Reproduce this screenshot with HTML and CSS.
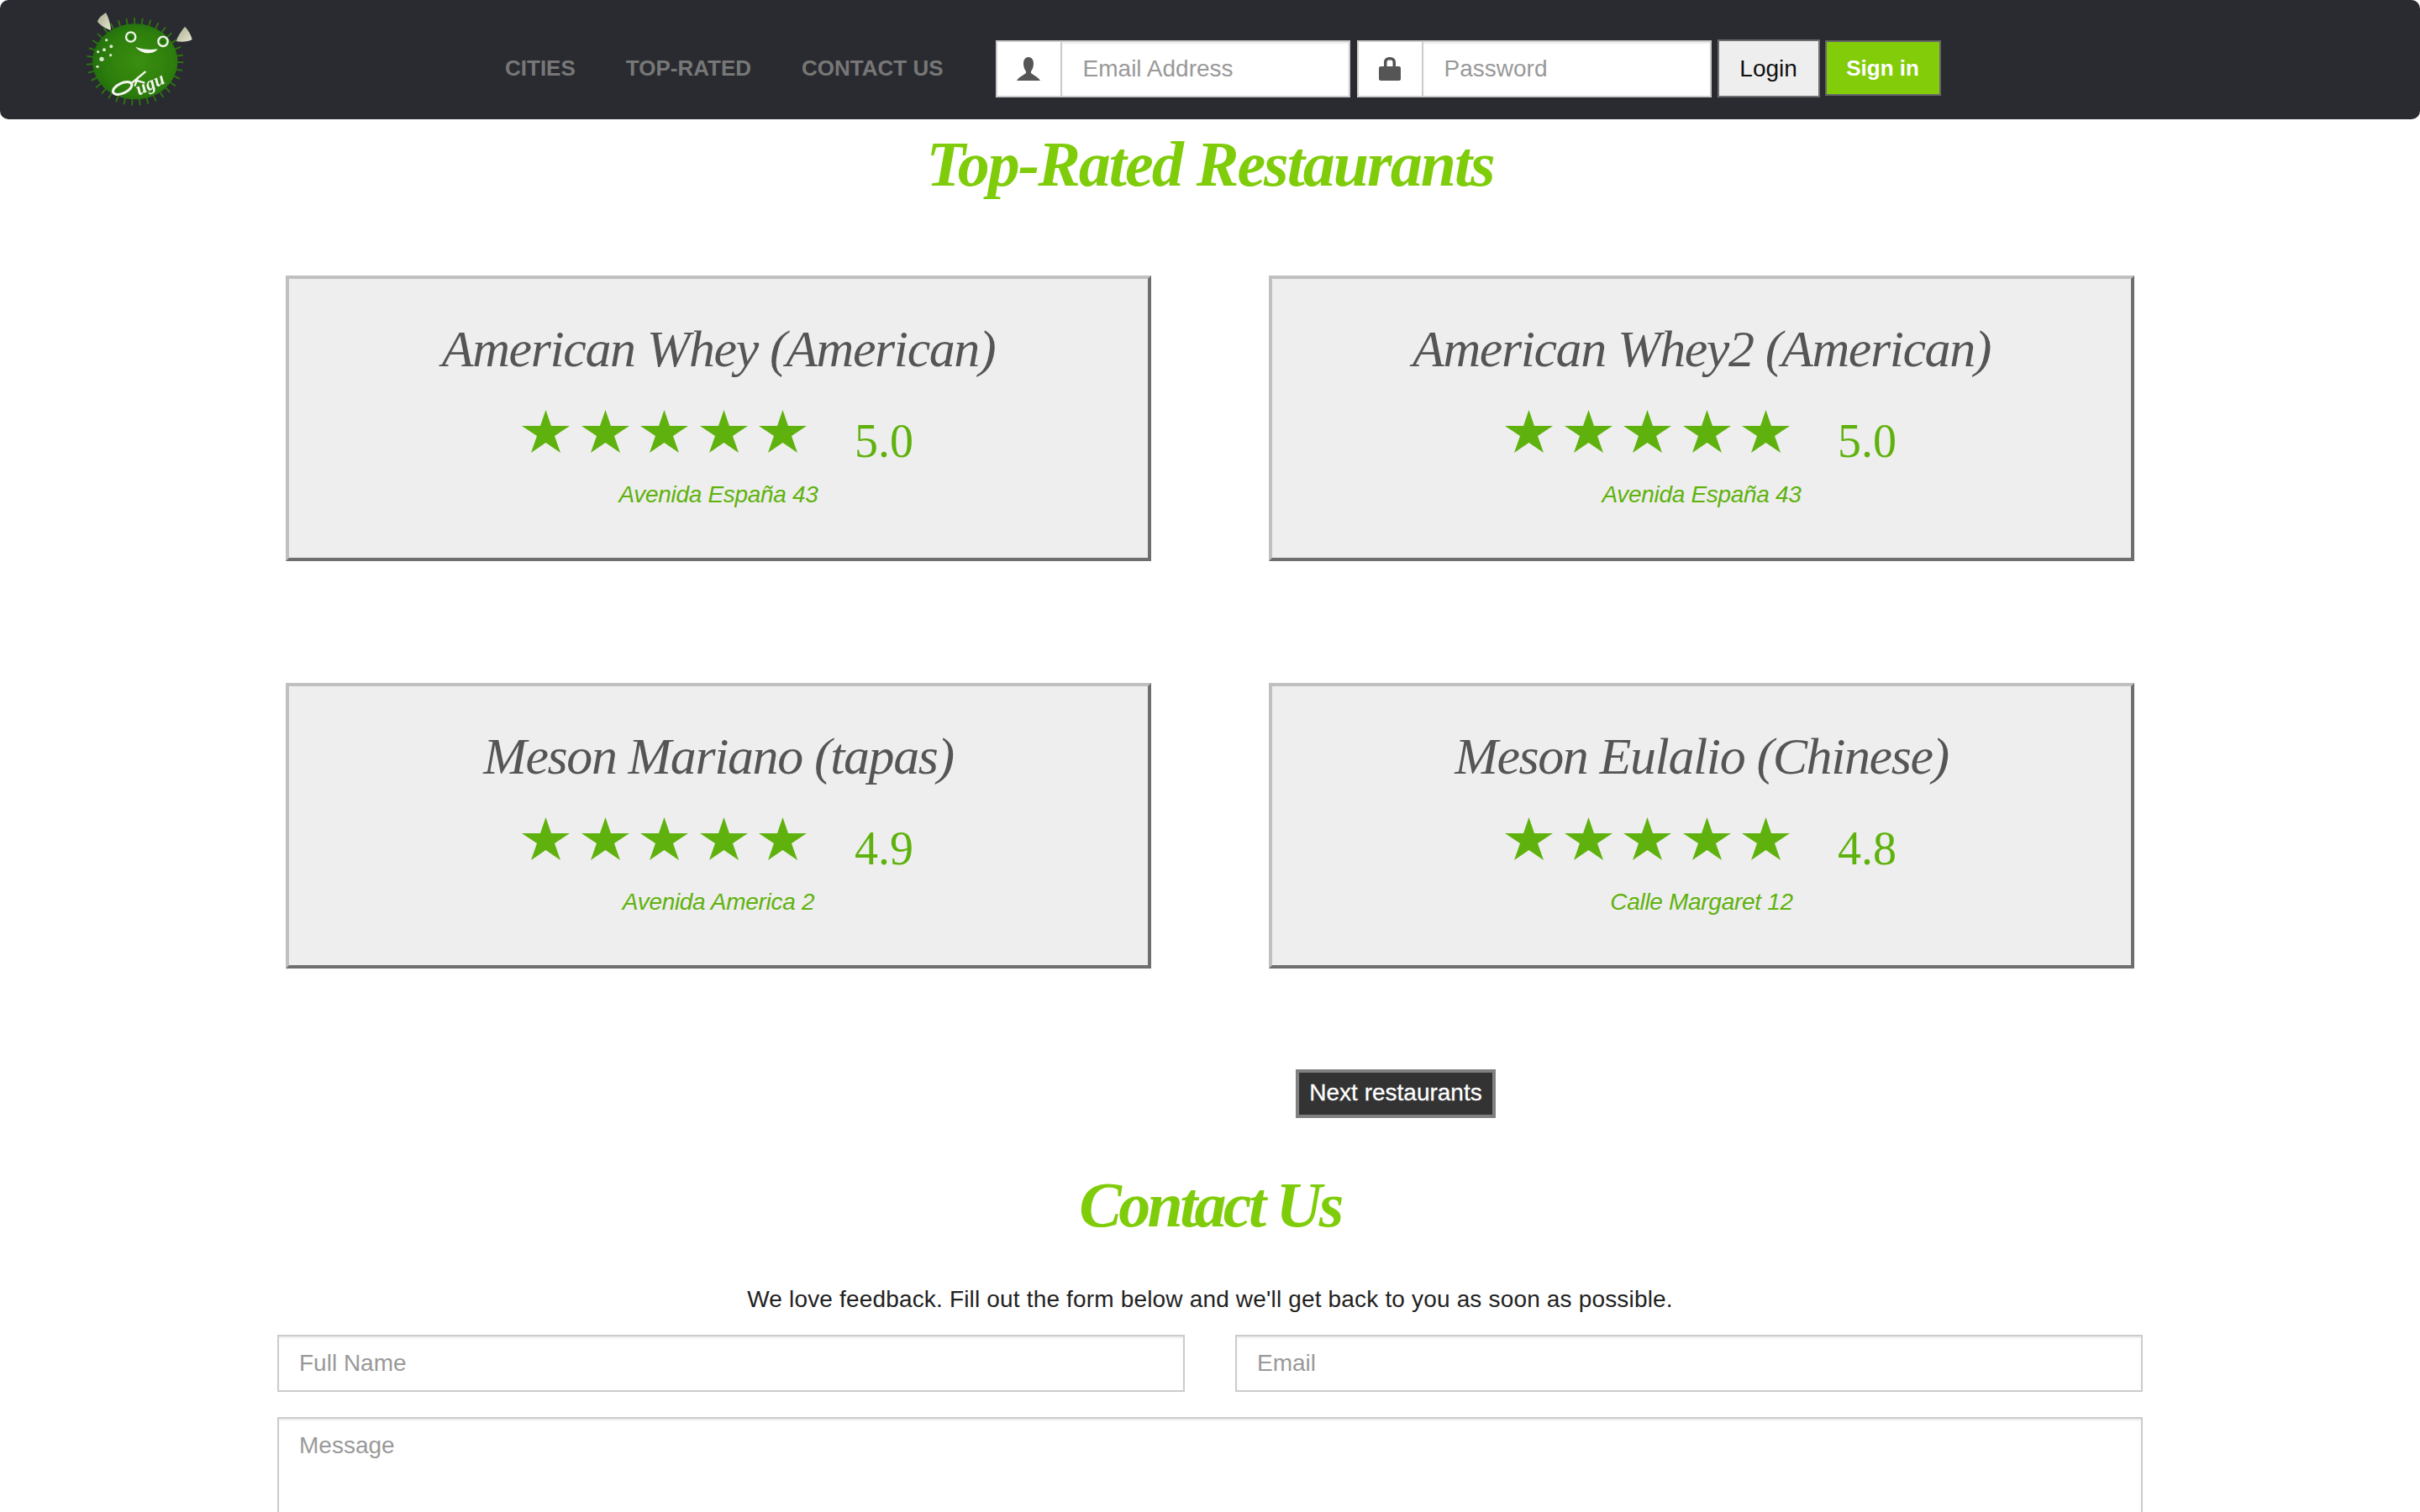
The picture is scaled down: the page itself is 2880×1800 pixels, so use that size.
FILE: index.html
```html
<!DOCTYPE html>
<html lang="en">
<head>
<meta charset="utf-8">
<title>Fugu - Top-Rated Restaurants</title>
<link rel="stylesheet" href="styles.css">
</head>
<body>
<header class="navbar">
  <svg class="logo" viewBox="0 0 450 390" aria-label="Fugu logo">
    <defs>
      <radialGradient id="bodyGrad" cx="55%" cy="50%" r="60%">
        <stop offset="0" stop-color="#3a8f12"/>
        <stop offset="0.7" stop-color="#2c7d0e"/>
        <stop offset="1" stop-color="#1f6a0b"/>
      </radialGradient>
      <linearGradient id="hornGrad" x1="0" y1="0" x2="1" y2="1">
        <stop offset="0" stop-color="#a8ad8a"/>
        <stop offset="1" stop-color="#e6e6d4"/>
      </linearGradient>
      <filter id="soft"><feGaussianBlur stdDeviation="1.6"/></filter>
    </defs>
    <g filter="url(#soft)">
      <path d="M108 30 C90 42 80 52 78 62 C88 76 108 88 126 92 C124 70 118 48 108 30Z" fill="url(#hornGrad)"/>
      <path d="M390 80 C378 94 366 112 358 132 C378 136 402 134 416 126 C412 108 402 92 390 80Z" fill="url(#hornGrad)"/>
      <ellipse cx="212" cy="205" rx="158" ry="142" fill="none" stroke="#2a7a0e" stroke-width="30" stroke-dasharray="5 22"/>
      <ellipse cx="212" cy="205" rx="152" ry="135" fill="url(#bodyGrad)"/>
      <circle cx="197" cy="117" r="17" fill="none" stroke="#f2f5ee" stroke-width="7"/>
      <circle cx="197" cy="119" r="6" fill="#1f6a0b"/>
      <circle cx="312" cy="133" r="17" fill="none" stroke="#f2f5ee" stroke-width="7"/>
      <circle cx="312" cy="135" r="6" fill="#1f6a0b"/>
      <path d="M214 152 C238 162 268 164 293 160 C284 178 238 184 214 152Z" fill="#f4f6ef"/>
      <g fill="#d8e6c8">
        <circle cx="110" cy="128" r="5"/>
        <circle cx="127" cy="151" r="6"/>
        <circle cx="102" cy="163" r="6"/>
        <circle cx="80" cy="170" r="5"/>
        <circle cx="125" cy="182" r="5"/>
        <circle cx="93" cy="196" r="8"/>
        <circle cx="78" cy="223" r="5"/>
      </g>
      <ellipse cx="167" cy="300" rx="36" ry="18" transform="rotate(-25 167 300)" fill="none" stroke="#f4f6ef" stroke-width="9"/>
      <path d="M200 282 L248 242 M222 262 L212 290 M214 272 L244 280" fill="none" stroke="#f4f6ef" stroke-width="7" stroke-linecap="round"/>
      <text class="logo-text" x="226" y="326" transform="rotate(-25 226 326)">ugu</text>
    </g>
  </svg>
  <nav class="nav-links">
    <a class="nav-link" href="#">CITIES</a>
    <a class="nav-link" href="#">TOP-RATED</a>
    <a class="nav-link" href="#">CONTACT US</a>
  </nav>
  <form class="login-form">
    <div class="input-group">
      <span class="addon">
        <svg class="addon-icon" viewBox="0 0 28 28"><path d="M14 0 C9.5 0 8 4 8 8 C8 12 9.5 15 11 17 L11 19 C9 21 3 23 0 28 L28 28 C25 23 19 21 17 19 L17 17 C18.500 15 20 12 20 8 C20 4 18.500 0 14 0Z" fill="#555"/></svg>
      </span>
      <input class="field" type="text" placeholder="Email Address">
    </div>
    <div class="input-group">
      <span class="addon">
        <svg class="addon-icon" viewBox="0 0 28 28"><path fill-rule="evenodd" d="M7 11 L7 6 C7 2 10 0 14 0 C18 0 21 2 21 6 L21 11 L25 11 C26 11 27 12 27 13 L27 26 C27 27 26 28 25 28 L3 28 C2 28 1 27 1 26 L1 13 C1 12 2 11 3 11Z M10.500 11 L17.500 11 L17.500 6 C17.500 4 16 3.500 14 3.500 C12 3.500 10.500 4 10.500 6Z" fill="#555"/></svg>
      </span>
      <input class="field" type="password" placeholder="Password">
    </div>
    <button class="btn btn-login" type="button">Login</button>
    <button class="btn btn-signin" type="button">Sign in</button>
  </form>
</header>

<main class="page">
  <h1 class="section-title top-title">Top-Rated Restaurants</h1>
  <section class="cards">
    <article class="card">
      <h2 class="card-title">American Whey (American)</h2>
      <div class="rating">
        <span class="stars">
          <svg class="star" viewBox="0 0 57 51"><polygon points="28.500,0 35,19 57,19 39,31 46,51 28.500,39 11,51 18,31 0,19 22,19"/></svg>
          <svg class="star" viewBox="0 0 57 51"><polygon points="28.500,0 35,19 57,19 39,31 46,51 28.500,39 11,51 18,31 0,19 22,19"/></svg>
          <svg class="star" viewBox="0 0 57 51"><polygon points="28.500,0 35,19 57,19 39,31 46,51 28.500,39 11,51 18,31 0,19 22,19"/></svg>
          <svg class="star" viewBox="0 0 57 51"><polygon points="28.500,0 35,19 57,19 39,31 46,51 28.500,39 11,51 18,31 0,19 22,19"/></svg>
          <svg class="star" viewBox="0 0 57 51"><polygon points="28.500,0 35,19 57,19 39,31 46,51 28.500,39 11,51 18,31 0,19 22,19"/></svg>
        </span>
        <span class="score">5.0</span>
      </div>
      <p class="address">Avenida España 43</p>
    </article>
    <article class="card">
      <h2 class="card-title">American Whey2 (American)</h2>
      <div class="rating">
        <span class="stars">
          <svg class="star" viewBox="0 0 57 51"><polygon points="28.500,0 35,19 57,19 39,31 46,51 28.500,39 11,51 18,31 0,19 22,19"/></svg>
          <svg class="star" viewBox="0 0 57 51"><polygon points="28.500,0 35,19 57,19 39,31 46,51 28.500,39 11,51 18,31 0,19 22,19"/></svg>
          <svg class="star" viewBox="0 0 57 51"><polygon points="28.500,0 35,19 57,19 39,31 46,51 28.500,39 11,51 18,31 0,19 22,19"/></svg>
          <svg class="star" viewBox="0 0 57 51"><polygon points="28.500,0 35,19 57,19 39,31 46,51 28.500,39 11,51 18,31 0,19 22,19"/></svg>
          <svg class="star" viewBox="0 0 57 51"><polygon points="28.500,0 35,19 57,19 39,31 46,51 28.500,39 11,51 18,31 0,19 22,19"/></svg>
        </span>
        <span class="score">5.0</span>
      </div>
      <p class="address">Avenida España 43</p>
    </article>
    <article class="card">
      <h2 class="card-title">Meson Mariano (tapas)</h2>
      <div class="rating">
        <span class="stars">
          <svg class="star" viewBox="0 0 57 51"><polygon points="28.500,0 35,19 57,19 39,31 46,51 28.500,39 11,51 18,31 0,19 22,19"/></svg>
          <svg class="star" viewBox="0 0 57 51"><polygon points="28.500,0 35,19 57,19 39,31 46,51 28.500,39 11,51 18,31 0,19 22,19"/></svg>
          <svg class="star" viewBox="0 0 57 51"><polygon points="28.500,0 35,19 57,19 39,31 46,51 28.500,39 11,51 18,31 0,19 22,19"/></svg>
          <svg class="star" viewBox="0 0 57 51"><polygon points="28.500,0 35,19 57,19 39,31 46,51 28.500,39 11,51 18,31 0,19 22,19"/></svg>
          <svg class="star" viewBox="0 0 57 51"><polygon points="28.500,0 35,19 57,19 39,31 46,51 28.500,39 11,51 18,31 0,19 22,19"/></svg>
        </span>
        <span class="score">4.9</span>
      </div>
      <p class="address">Avenida America 2</p>
    </article>
    <article class="card">
      <h2 class="card-title">Meson Eulalio (Chinese)</h2>
      <div class="rating">
        <span class="stars">
          <svg class="star" viewBox="0 0 57 51"><polygon points="28.500,0 35,19 57,19 39,31 46,51 28.500,39 11,51 18,31 0,19 22,19"/></svg>
          <svg class="star" viewBox="0 0 57 51"><polygon points="28.500,0 35,19 57,19 39,31 46,51 28.500,39 11,51 18,31 0,19 22,19"/></svg>
          <svg class="star" viewBox="0 0 57 51"><polygon points="28.500,0 35,19 57,19 39,31 46,51 28.500,39 11,51 18,31 0,19 22,19"/></svg>
          <svg class="star" viewBox="0 0 57 51"><polygon points="28.500,0 35,19 57,19 39,31 46,51 28.500,39 11,51 18,31 0,19 22,19"/></svg>
          <svg class="star" viewBox="0 0 57 51"><polygon points="28.500,0 35,19 57,19 39,31 46,51 28.500,39 11,51 18,31 0,19 22,19"/></svg>
        </span>
        <span class="score">4.8</span>
      </div>
      <p class="address">Calle Margaret 12</p>
    </article>
  </section>
  <div class="pager"><button class="btn-next" type="button">Next restaurants</button></div>
  <h1 class="section-title contact-title">Contact Us</h1>
  <p class="contact-intro">We love feedback. Fill out the form below and we'll get back to you as soon as possible.</p>
  <form class="contact-form">
    <input class="contact-field" type="text" placeholder="Full Name">
    <input class="contact-field" type="text" placeholder="Email">
    <textarea class="contact-field contact-message" placeholder="Message"></textarea>
  </form>
</main>
</body>
</html>
```
FILE: styles.css
```css
html, body {
  margin: 0;
  padding: 0;
  height: 1800px;
  overflow: hidden;
  background: #fff;
  font-family: "Liberation Sans", Arial, sans-serif;
  color: #333;
}

.navbar {
  display: flex;
  align-items: flex-start;
  height: 142px;
  background: #2a2b30;
  border-radius: 10px;
  box-sizing: border-box;
}
.logo {
  width: 150px;
  height: 130px;
  margin-left: 90px;
  margin-top: 5px;
  flex: none;
}
.logo-text {
  font-family: "Liberation Serif", serif;
  font-style: italic;
  font-weight: 700;
  font-size: 66px;
  fill: #f4f6ef;
}
.nav-links {
  display: flex;
  gap: 60px;
  margin-left: 361px;
  margin-top: 65px;
}
.nav-link {
  font-size: 26px;
  font-weight: 700;
  color: #777;
  text-decoration: none;
  line-height: 32px;
}
.login-form {
  display: flex;
  align-items: flex-start;
  margin-left: 62px;
  margin-top: 48px;
}
.input-group {
  display: flex;
  width: 422px;
  height: 68px;
  margin-right: 8px;
  box-sizing: border-box;
  border: 2px solid #ccc;
  background: #fff;
}
.addon {
  display: flex;
  align-items: center;
  justify-content: center;
  width: 77px;
  flex: none;
  border-right: 2px solid #ccc;
  box-sizing: border-box;
}
.addon-icon { width: 28px; height: 28px; display: block; }
.field {
  flex: 1;
  min-width: 0;
  border: 0;
  outline: 0;
  padding: 0 24px 0 25px;
  font: 28px "Liberation Sans", Arial, sans-serif;
  background: transparent;
  box-shadow: inset 0 2px 2px rgba(0,0,0,.075);
}
.field::placeholder, .contact-field::placeholder { color: #999; opacity: 1; }
.btn {
  box-sizing: border-box;
  font-family: "Liberation Sans", Arial, sans-serif;
  font-size: 28px;
  padding: 0;
}
.btn-login {
  width: 122px;
  height: 69px;
  margin-top: -1px;
  margin-left: -1px;
  background: #eee;
  border: 2px solid #6e6e6e;
  color: #111;
}
.btn-signin {
  width: 138px;
  height: 66px;
  margin-left: 6px;
  background: #82cc0a;
  border: 2px solid #666;
  color: #fff;
  font-weight: 700;
  font-size: 26px;
}

.page { display: block; }
.section-title {
  margin: 0;
  text-align: center;
  font-family: "Liberation Serif", serif;
  font-style: italic;
  font-weight: 700;
  font-size: 76px;
  line-height: 106px;
  color: #7fcc0a;
}
.top-title { letter-spacing: -2px; }
.cards {
  display: grid;
  grid-template-columns: 1030px 1030px;
  justify-content: center;
  column-gap: 140px;
  row-gap: 145px;
  margin-top: 80px;
}
.card {
  box-sizing: border-box;
  height: 340px;
  background: #eee;
  border: 4px solid;
  border-color: #c0c0c0 #6e6e6e #6e6e6e #c0c0c0;
  text-align: center;
  padding-top: 41px;
}
.card-title {
  margin: 0;
  font-family: "Liberation Serif", serif;
  font-style: italic;
  font-weight: 400;
  font-size: 62px;
  letter-spacing: -1.4px;
  line-height: 84px;
  color: #555;
}
.rating {
  display: flex;
  justify-content: center;
  align-items: flex-start;
  margin-top: 31px;
}
.stars { display: flex; gap: 13.500px; }
.star { width: 57px; height: 51px; fill: #5fb20d; display: block; }
.score {
  font-family: "Liberation Serif", serif;
  font-size: 56px;
  line-height: 64px;
  color: #5fb20d;
  margin-left: 57px;
  margin-right: 2px;
  margin-top: 5px;
}
.address {
  margin: 14px 0 0;
  font-size: 28px;
  letter-spacing: -0.3px;
  line-height: 36px;
  font-style: italic;
  color: #5fb20d;
}
.pager {
  display: flex;
  justify-content: flex-start;
  margin-top: 120px;
  padding-left: 1542px;
}
.btn-next {
  width: 238px;
  height: 58px;
  box-sizing: border-box;
  border: 4px solid #808080;
  background: #333;
  color: #fff;
  font: 28px "Liberation Sans", Arial, sans-serif;
  -webkit-text-stroke: 0.3px #fff;
  padding: 0 0 2px;
}
.contact-title { margin-top: 50px; letter-spacing: -3.700px; }
.contact-intro {
  margin: 40px 0 0;
  text-align: center;
  font-size: 28px;
  letter-spacing: 0.17px;
  line-height: 40px;
  color: #222;
}
.contact-form {
  display: grid;
  grid-template-columns: 1080px 1080px;
  justify-content: center;
  column-gap: 60px;
  row-gap: 30px;
  margin-top: 22px;
}
.contact-field {
  box-sizing: border-box;
  height: 68px;
  border: 2px solid #ccc;
  padding: 0 24px;
  font: 28px "Liberation Sans", Arial, sans-serif;
  outline: 0;
  background: #fff;
  box-shadow: inset 0 2px 2px rgba(0,0,0,.075);
  display: block;
}
.contact-message {
  grid-column: 1 / -1;
  width: 100%;
  height: 240px;
  padding: 16px 24px;
  resize: none;
}
```
